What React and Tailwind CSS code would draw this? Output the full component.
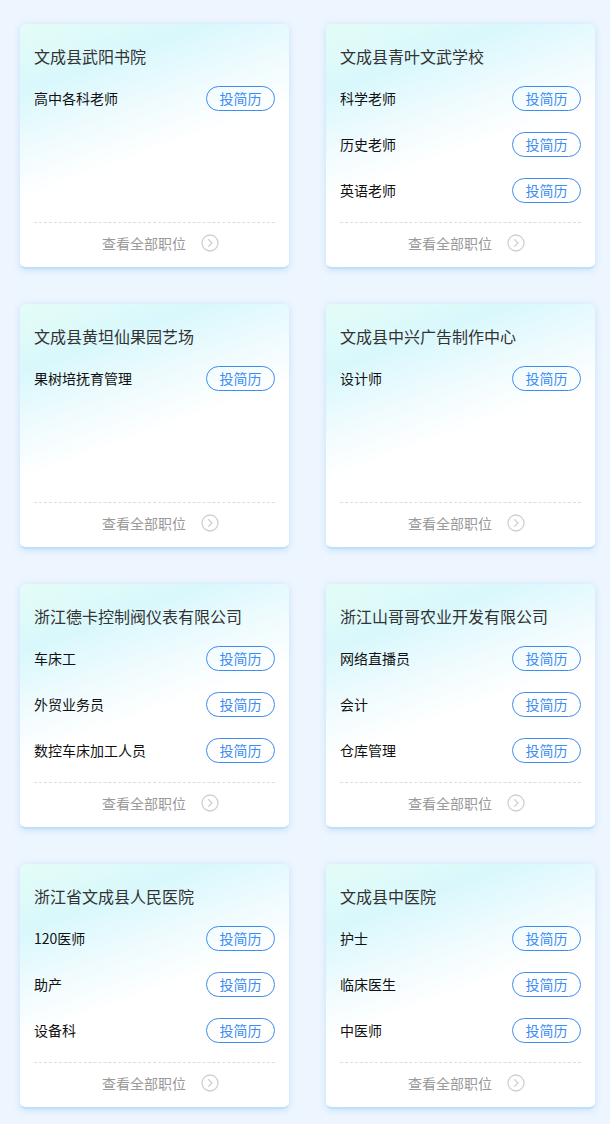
const companies = [
  { name: '文成县武阳书院', jobs: ['高中各科老师'] },
  { name: '文成县青叶文武学校', jobs: ['科学老师', '历史老师', '英语老师'] },
  { name: '文成县黄坦仙果园艺场', jobs: ['果树培抚育管理'] },
  { name: '文成县中兴广告制作中心', jobs: ['设计师'] },
  { name: '浙江德卡控制阀仪表有限公司', jobs: ['车床工', '外贸业务员', '数控车床加工人员'] },
  { name: '浙江山哥哥农业开发有限公司', jobs: ['网络直播员', '会计', '仓库管理'] },
  { name: '浙江省文成县人民医院', jobs: ['120医师', '助产', '设备科'] },
  { name: '文成县中医院', jobs: ['护士', '临床医生', '中医师'] },
]

function ArrowCircle() {
  return (
    <svg width="18" height="18" viewBox="0 0 18 18" fill="none">
      <circle cx="9" cy="9" r="8" stroke="#cfcfcf" strokeWidth="1.3" />
      <path d="M7.6 5.6 L11 9 L7.6 12.4" stroke="#cfcfcf" strokeWidth="1.3" strokeLinecap="round" strokeLinejoin="round" />
    </svg>
  )
}

function CompanyCard({ company }) {
  return (
    <div className="h-[245px] rounded-md flex flex-col bg-[linear-gradient(160deg,#e4fcf6_0%,#d9f8fc_20%,#eefbfe_36%,#ffffff_52%)] border-b-2 border-[#bde0f8] shadow-[0_1px_6px_rgba(120,185,245,0.35)]">
      <div className="px-[14px] pt-[20px] text-[16px] leading-[24px] text-[#333]">{company.name}</div>
      <div className="flex-1 mt-[7px] px-[14px]">
        {company.jobs.map((job, i) => (
          <div key={i} className="h-[46px] flex items-center justify-between">
            <span className="text-[14px] text-[#111]">{job}</span>
            <button className="w-[69px] h-[25px] rounded-full border border-[#3d8cf2] text-[#3d8cf2] text-[14px] leading-none flex items-center justify-center">
              投简历
            </button>
          </div>
        ))}
      </div>
      <div className="mx-[14px] border-t border-dashed border-[#dddddd]" />
      <div className="h-[40px] mb-[4px] pl-[12px] flex items-center justify-center gap-[15px]">
        <span className="text-[14px] text-[#999]">查看全部职位</span>
        <ArrowCircle />
      </div>
    </div>
  )
}

export default function App() {
  return (
    <div className="min-h-[1124px] bg-[#edf5fe] pt-[24px] pl-[20px] font-['Noto_Sans_CJK_SC','Noto_Sans',sans-serif]">
      <div className="grid grid-cols-[269px_269px] gap-x-[37px] gap-y-[35px]">
        {companies.map((c, i) => (
          <CompanyCard key={i} company={c} />
        ))}
      </div>
    </div>
  )
}
